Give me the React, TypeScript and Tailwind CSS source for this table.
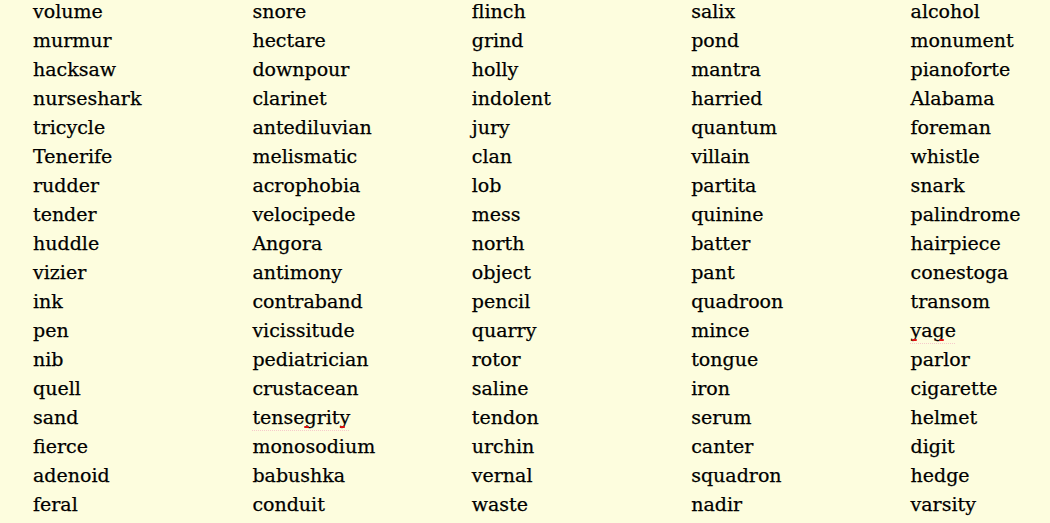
import React from "react";

const cols: string[][] = [
  ["volume","murmur","hacksaw","nurseshark","tricycle","Tenerife","rudder","tender","huddle","vizier","ink","pen","nib","quell","sand","fierce","adenoid","feral"],
  ["snore","hectare","downpour","clarinet","antediluvian","melismatic","acrophobia","velocipede","Angora","antimony","contraband","vicissitude","pediatrician","crustacean","tensegrity","monosodium","babushka","conduit"],
  ["flinch","grind","holly","indolent","jury","clan","lob","mess","north","object","pencil","quarry","rotor","saline","tendon","urchin","vernal","waste"],
  ["salix","pond","mantra","harried","quantum","villain","partita","quinine","batter","pant","quadroon","mince","tongue","iron","serum","canter","squadron","nadir"],
  ["alcohol","monument","pianoforte","Alabama","foreman","whistle","snark","palindrome","hairpiece","conestoga","transom","yage","parlor","cigarette","helmet","digit","hedge","varsity"],
];

// spell-check marks: [word, offsets (px from word start)]
const marks: Record<string, number[]> = {
  tensegrity: [52, 88],
  yage: [1, 28],
};

export default function App() {
  return (
    <div
      className="w-[1050px] h-[523px] overflow-hidden bg-[#fdfdde] text-black relative"
      style={{ fontFamily: '"DejaVu Serif", serif' }}
    >
      <div className="flex pl-[33px] mt-[-3px]">
        {cols.map((col, ci) => (
          <div key={ci} className="flex flex-col w-[219.4px] shrink-0">
            {col.map((w) => (
              <div
                key={w}
                className="h-[29px] leading-[29px] text-[19px] whitespace-nowrap [-webkit-text-stroke:0.25px_black]"
              >
                {marks[w] ? (
                  <span className="relative inline-block underline decoration-dotted decoration-[#f6caca] underline-offset-[6px] decoration-[1px]">
                    {w}
                    {marks[w].map((x) => (
                      <span
                        key={x}
                        className="absolute top-[23px] w-[5px] h-[2px] rounded-full bg-[#e01010]"
                        style={{ left: x }}
                      />
                    ))}
                  </span>
                ) : (
                  w
                )}
              </div>
            ))}
          </div>
        ))}
      </div>
    </div>
  );
}
